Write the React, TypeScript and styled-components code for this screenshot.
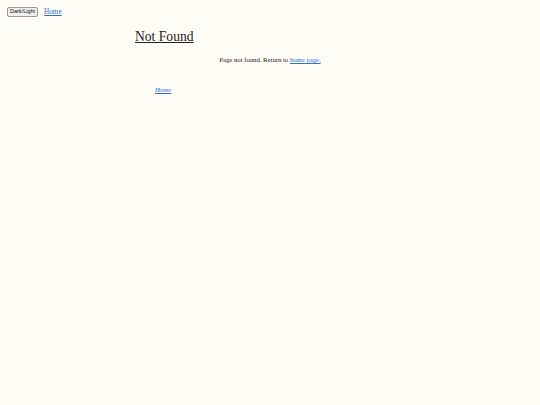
import React from 'react';
import styled, { createGlobalStyle } from 'styled-components';

const Global = createGlobalStyle`
html, body {
  margin: 0;
  padding: 0;
  background: #fffdf6;
}
body {
  font-family: "Liberation Serif", "Times New Roman", serif;
  color: #222;
  min-height: 100vh;
}
`
const Nav = styled.nav`
display: flex;
align-items: center;
gap: 6px;
padding: 7px 7px 0 7px;
height: 10px;
`
const ToggleBtn = styled.button`
font-family: "Liberation Sans", Arial, sans-serif;
font-size: 5.5px;
height: 10px;
padding: 0 2px;
background: #efefef;
border: 1px solid #9a9a9a;
border-radius: 2px;
color: #111;
line-height: 1;
`
const Link = styled.a`
font-size: 7.2px;
color: #2f6fd0;
text-decoration: underline;
`
const Main = styled.main`
margin: 0 135px;
padding-top: 12px;
`
const Title = styled.h1`
font-size: 13.6px;
font-weight: normal;
text-decoration: underline;
margin: 0;
line-height: 16px;
`
const Message = styled.p`
font-size: 6.7px;
text-align: center;
margin: 11px 0 0 0;
`
const Links = styled.ul`
list-style: none;
margin: 15px 0 0 0;
padding-left: 20px;
`
const ItalicLink = styled(Link)`
font-style: italic;
font-size: 6.8px;
`
const InlineLink = styled(Link)`
font-size: 6.7px;
`

function App() {
  return (
    <>
      <Global />
      <Nav>
        <ToggleBtn>Dark/Light</ToggleBtn>
        <Link href="#">Home</Link>
      </Nav>
      <Main>
        <Title>Not Found</Title>
        <Message>Page not found. Return to <InlineLink href="#">home page.</InlineLink></Message>
        <Links>
          <li><ItalicLink href="#">Home</ItalicLink></li>
        </Links>
      </Main>
    </>
  );
}

export default App;
